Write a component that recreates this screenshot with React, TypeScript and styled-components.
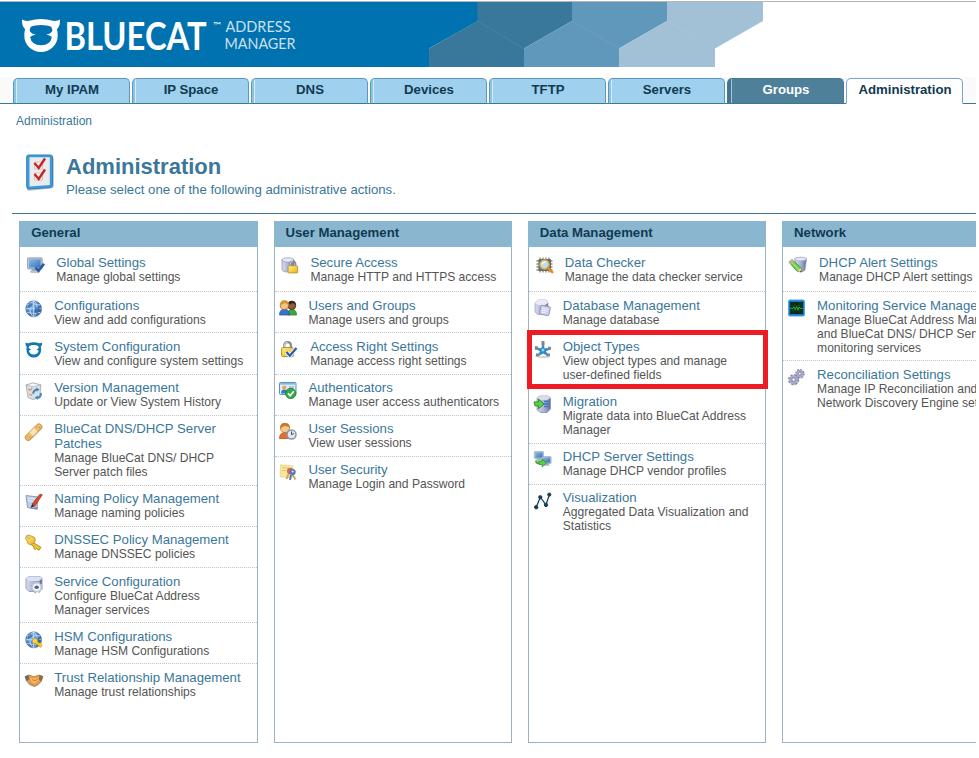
import React from "react";
import styled, { createGlobalStyle, css } from "styled-components";

const GlobalStyle = createGlobalStyle`
  *, *::before, *::after { box-sizing: border-box; }
  html, body { margin: 0; padding: 0; background: #fff; overflow: hidden; }
  body { font-family: "Liberation Sans", Arial, sans-serif; font-size: 12px; color: #555; }
`;

const Page = styled.div`
  width: 976px;
  height: 758px;
  overflow: hidden;
  padding-top: 1px;
`;

const Banner = styled.header`
  height: 66px;
  border-top: 1px solid #b3b6b6;
  svg { display: block; }
`;

const TabBar = styled.nav`
  display: flex;
  gap: 2px;
  height: 27px;
  margin-top: 10px;
  padding: 1px 0 0 13px;
  background: linear-gradient(#3a7898, #3a7898) bottom / 100% 1px no-repeat #fafafa;
`;

type TabKind = "normal" | "dark" | "active";

const tabLooks = {
  normal: css`
    color: #113a50;
    border-color: #5b98bd;
    border-bottom-color: #3a7898;
    background: linear-gradient(90deg, #8cc4e4 2px, #d5edfa 2px, #d5edfa 3px, #9fd0ee 3px);
  `,
  dark: css`
    color: #fff;
    border-color: #427a94;
    border-bottom-color: #3a7898;
    background: linear-gradient(90deg, #44748d 3px, #a5c8d6 3px, #a5c8d6 4px, #4f8099 4px);
  `,
  active: css`
    color: #113a50;
    border-color: #7ba5d8;
    border-bottom-color: #fff;
    background: #fff;
  `,
};

const Tab = styled.a<{ $kind: TabKind }>`
  width: 117px;
  height: 26px;
  flex: none;
  padding-left: 1px;
  border: 1px solid;
  border-radius: 5px 5px 0 0;
  text-align: center;
  font-size: 13.2px;
  line-height: 22px;
  font-weight: bold;
  ${(p) => tabLooks[p.$kind]}
`;

const Breadcrumb = styled.div`
  padding: 10px 16px 0;
  line-height: 14px;
  color: #3a7799;
`;

const Heading = styled.section`
  display: flex;
  gap: 11px;
  margin: 26px 0 0 12px;
  padding-left: 13px;
  height: 60px;
  border-bottom: 1px solid #3a7799;
  color: #3a7799;
`;

const Title = styled.h1`
  margin: 0;
  font-size: 22px;
  line-height: 25px;
`;

const Subtitle = styled.p`
  margin: 3px 0 0;
  font-size: 13.2px;
  line-height: 15px;
`;

const Columns = styled.main`
  display: flex;
  gap: 15.8px;
  padding: 7px 0 0 19.4px;
`;

const Panel = styled.section`
  flex: none;
  width: 238.5px;
  height: 522px;
  border: 1px solid #9bb3c5;
  border-top: 0;
`;

const PanelHeader = styled.h2`
  margin: 0 -1px;
  height: 26px;
  padding-left: 11.8px;
  background: #8bb6d0;
  color: #113a50;
  font-size: 13.2px;
  line-height: 24px;
`;

const Row = styled.div<{ $first: boolean; $shift: number }>`
  display: flex;
  gap: 11px;
  padding: ${(p) => (p.$first ? "8.4px 0 6.8px" : "5.5px 0 5.66px")} ${(p) => 4.8 + p.$shift}px;
  border-bottom: 1px dotted #c4c4c4;
  white-space: pre;
  &:last-child { border-bottom: 0; }
`;

const MarkedRow = styled(Row)`
  position: relative;
  &::after {
    content: "";
    position: absolute;
    inset: -3px -3px -1px -2px;
    border: 5px solid #ed1c24;
  }
`;

const IconSlot = styled.span`
  flex: none;
  width: 18px;
  height: 18px;
  margin-top: 2px;
  svg { display: block; overflow: visible; }
`;

const RowTitle = styled.a`
  display: block;
  color: #3a7799;
  font-size: 13.2px;
  line-height: 15px;
`;

const RowText = styled.div`
  color: #555;
  font-size: 12.08px;
  line-height: 14px;
`;

/* ---------- icon building blocks ---------- */

const Globe = () => (
  <g>
    <circle cx="9" cy="9.5" r="8" fill="#a8b2bc" opacity=".6" />
    <circle cx="8.6" cy="8.7" r="7.8" fill="url(#globe)" stroke="#486ba3" strokeWidth=".8" />
    <g fill="none" stroke="#bfdcf5" strokeWidth=".9">
      <ellipse cx="8.6" cy="8.7" rx="3.6" ry="7.6" />
      <path d="M8.6 1v15.4M1 8.7h15.2M2.2 5q6.4-2.2 12.8 0M2.2 12.4q6.4 2.2 12.8 0" />
    </g>
    <path d="M3 5l3-2 2 1-2 3-3 1zM10 8l4-1 1 3-3 4-2-2z" fill="#295b9c" opacity=".7" />
  </g>
);

const Cylinder = ({ x = 0, y = 0, w = 14, h = 15 }: { x?: number; y?: number; w?: number; h?: number }) => (
  <g transform={`translate(${x} ${y}) scale(${w / 14} ${h / 15})`}>
    <path d="M1 3v9.5q0 2.5 6 2.5t6-2.5V3z" fill="url(#drum)" stroke="#8a90ab" strokeWidth=".7" />
    <ellipse cx="7" cy="3" rx="6" ry="2.2" fill="#e6e9f7" stroke="#8990b2" strokeWidth=".7" />
  </g>
);

const Monitor = ({ x = 0, y = 0, s = 1 }: { x?: number; y?: number; s?: number }) => (
  <g transform={`translate(${x} ${y}) scale(${s})`}>
    <path d="M5 11h5l1.5 3h-8z" fill="#9ba6b4" />
    <rect x=".5" y=".8" width="14" height="10.6" rx="1" fill="#b7c6d6" stroke="#8b9cae" strokeWidth=".8" />
    <rect x="2" y="2.2" width="11" height="7.8" fill="url(#screen)" />
    <ellipse cx="7.5" cy="14" rx="5" ry="1.2" fill="#bbc2ca" />
  </g>
);

const Gear = ({ cx, cy, r }: { cx: number; cy: number; r: number }) => (
  <g>
    <circle cx={cx + 0.6} cy={cy + 0.8} r={r} fill="#999" opacity=".4" />
    <circle cx={cx} cy={cy} r={r * 0.92} fill="none" stroke="#7e82a4" strokeWidth={r * 0.34} strokeDasharray={`${r * 0.4} ${r * 0.323}`} />
    <circle cx={cx} cy={cy} r={r * 0.62} fill="#f4f4fc" stroke="#a5a8cc" strokeWidth={r * 0.5} />
    <circle cx={cx} cy={cy} r={r * 0.33} fill="#fff" stroke="#686c90" strokeWidth=".8" />
  </g>
);

const Padlock = ({ x, y, s = 1 }: { x: number; y: number; s?: number }) => (
  <g transform={`translate(${x} ${y}) scale(${s})`}>
    <path d="M2.7 6V4.2Q2.7 1 5.5 1t2.8 3.2V6" fill="none" stroke="#858b94" strokeWidth="1.9" />
    <path d="M2.7 6V4.2Q2.7 1 5.5 1" fill="none" stroke="#d6dade" strokeWidth=".8" />
    <rect x=".5" y="5.5" width="10" height="7.5" rx="1" fill="url(#gold)" stroke="#b58a25" strokeWidth=".8" />
  </g>
);

const GreenArrow = ({ x, y, s = 1 }: { x: number; y: number; s?: number }) => (
  <path
    transform={`translate(${x} ${y}) scale(${s})`}
    d="M0 3.5h4.5V.6L10 5.5l-5.5 5V7.5H1z"
    fill="#5bd246"
    stroke="#24842c"
    strokeWidth=".9"
  />
);

const catPath =
  "M.5 2.2Q4 4.4 9 3.2Q13 1.6 19.5 1.6T30 3.2Q35 4.4 38.5 2.2Q39 8.5 35.4 12Q36.4 15 36.2 18.5A16.7 16.2 0 0 1 2.8 18.5Q2.6 15 3.6 12Q0 8.5 .5 2.2Z" +
  "M9.4 9.4Q13 7.6 19.5 7.6T29.6 9.4Q31.6 12.5 30.2 14.6Q28.4 16.6 24.8 17.2Q28.2 17.9 30.4 19.8Q29 28 19.5 28T8.6 19.8Q10.8 17.9 14.2 17.2Q10.6 16.6 8.8 14.6Q7.4 12.5 9.4 9.4Z";

const icons: Record<string, React.ReactNode> = {
  global: (
    <g>
      <Monitor x={0} y={0} s={1.05} />
      <path d="M8.5 10.5l3 3.3 5.5-7" fill="none" stroke="#2459a8" strokeWidth="2.6" />
    </g>
  ),
  globe: <Globe />,
  cat: <path d={catPath} fill="#1377b0" fillRule="evenodd" transform="translate(.2 .6) scale(.44 .46)" />,
  version: (
    <g>
      <path d="M1 3l7-2 8 2-1.5 13-7 1.5L3 15.5z" fill="#dcdfe1" stroke="#9fa6ad" strokeWidth=".8" />
      <path d="M1 3l7 1.7L16 3 8 1z" fill="#f6f7f8" stroke="#9fa6ad" strokeWidth=".6" />
      <path d="M3.5 7q2 2.5 3.5-1M4.5 12l2.5 1.5" fill="none" stroke="#de8a6b" strokeWidth="1.3" />
      <path d="M8.2 11.8q.3-4 4-4.2M15.8 10.8q.6 4.6-3.6 5" fill="none" stroke="#4385bd" strokeWidth="2" />
      <path d="M11.2 5.5l3.5 2-3.2 2.2zM13 13.5l-3.3 2.2 3.3 2z" fill="#4385bd" />
    </g>
  ),
  patch: (
    <g transform="rotate(-45 9 9)">
      <rect x="-1.8" y="6.8" width="21" height="5.6" rx="2.8" fill="#8c745a" opacity=".5" />
      <rect x="-2" y="5.8" width="21" height="5.6" rx="2.8" fill="#efbd67" stroke="#c08a3f" strokeWidth=".8" />
      <rect x="5.5" y="6.2" width="6.4" height="4.9" fill="#f9e6b8" />
      <path d="M.8 7.5h.1m1.5 2.3h.1M14.5 7.5h.1m1.4 2.2h.1" stroke="#b87c35" strokeWidth="1" strokeLinecap="round" />
    </g>
  ),
  naming: (
    <g>
      <path d="M1 2.5l12 1.5-1 12-9.5-1.5z" fill="#b9cfea" stroke="#8496ac" strokeWidth=".9" />
      <path d="M3 5l7 1M3 7.5l6 1" stroke="#e9f1fb" strokeWidth="1.2" />
      <path d="M4.5 15.5l8 1.2.5-3z" fill="#777" opacity=".6" />
      <path d="M7.2 10.8L15 1.2l2.3.6-7.6 11.5z" fill="#e0442f" stroke="#a43728" strokeWidth=".8" />
      <path d="M7.2 10.8l2.5 2.5-4.2 1.7z" fill="#373737" />
    </g>
  ),
  key: (
    <g transform="translate(-.5 -.6)">
      <path d="M8.5 9l8 5-2 2.8-2.6-1.6-1.1 1-1.8-1.5.7-1.2L6.5 11z" fill="#eec32c" stroke="#a88420" strokeWidth=".9" />
      <path d="M2 2.5Q5 .5 7.6 3.2q2.5-.1 3.1 2.4.5 3.3-2.3 4.4-1.8 2.2-4 .7Q2 9.6 2.8 7.7-.4 5 2 2.5z" fill="url(#gold)" stroke="#b8922b" strokeWidth=".9" />
      <ellipse cx="4" cy="4.3" rx="1.2" ry=".8" fill="#fff" stroke="#ac8214" strokeWidth=".6" transform="rotate(40 4 4.3)" />
    </g>
  ),
  service: (
    <g>
      <path d="M1 2.5L4 .5h11l2 2v10l-3 3H4l-3-3z" fill="url(#drum)" stroke="#8b92ae" strokeWidth=".8" />
      <path d="M1 2.5L4 .5h11l2 2L14 5H4z" fill="#dce1f1" />
      <circle cx="11.7" cy="11.3" r="5.2" fill="none" stroke="#b3b9c4" strokeWidth="1.8" strokeDasharray="2.3 1.8" />
      <circle cx="11.7" cy="11.3" r="4.4" fill="#f3f4f8" stroke="#c3c9d3" strokeWidth="1.2" />
      <ellipse cx="11.7" cy="11.3" rx="2.2" ry="1.7" fill="#43659b" />
    </g>
  ),
  hsm: (
    <g>
      <Globe />
      <path d="M11 11l5.5 4.5" stroke="#b68a18" strokeWidth="3.2" />
      <circle cx="9.9" cy="10" r="2.6" fill="#ffd848" stroke="#c09a2c" strokeWidth=".8" />
      <path d="M11 11l5.5 4.5M14.5 13.5l2.5-1" stroke="#f8cb28" strokeWidth="2" />
    </g>
  ),
  hands: (
    <g>
      <path d="M1 8q7 9 16 1l-4 4.7-4 1.3-5-2z" fill="#888" opacity=".5" />
      <path d="M0 4.5L4 3l5 1.8L14 3l4 1.5-1.8 5-3.7 3-3.2 1.8L5 12.2 1.5 9z" fill="#e79a48" stroke="#a56a35" strokeWidth=".7" />
      <path d="M0 4.5L3.4 3 4.4 7 1.8 9.2z" fill="#5d7079" />
      <path d="M18 4.5L14.6 3l-1 4 2.6 2.5z" fill="#8c6a58" />
      <path d="M5 5.6l4 1L13 5l.8 3L9.6 12 6 9.8z" fill="#fbb65d" />
      <path d="M7 7.5l3 1.3 3-2" fill="none" stroke="#b3682b" strokeWidth=".7" />
    </g>
  ),
  secure: (
    <g>
      <Cylinder x={0} y={0} w={14} h={15} />
      <Padlock x={6.6} y={3.5} s={0.96} />
    </g>
  ),
  users: (
    <g>
      <path d="M8.5 15q0-5.5 4.5-5.5t4.5 5.5z" fill="#3eaa3a" stroke="#286e2a" strokeWidth=".7" />
      <circle cx="12.8" cy="5.5" r="4" fill="#8d5d36" stroke="#38271c" strokeWidth=".8" />
      <path d="M8.8 5.2q0-4.4 4-4.4t4 4.4l-3-2.3z" fill="#302620" />
      <path d="M.5 15q0-5.8 5-5.8t5 5.8z" fill="#3675ca" stroke="#234a8c" strokeWidth=".7" />
      <circle cx="5.4" cy="5.4" r="4.2" fill="#f6c582" stroke="#96642a" strokeWidth=".8" />
      <path d="M1 5.4Q1 .2 5.4.2t4.6 5L6 2.9z" fill="#d39335" />
    </g>
  ),
  access: (
    <g transform="translate(-1 0)">
      <Padlock x={1} y={0} s={1.2} />
      <path d="M6.5 11l3.3 3.7L16.5 7" fill="none" stroke="#fff" strokeWidth="4" />
      <path d="M6.5 11l3.3 3.7L16.5 7" fill="none" stroke="#2a5eb1" strokeWidth="2.3" />
    </g>
  ),
  auth: (
    <g>
      <rect x=".5" y=".5" width="16.5" height="12" rx="1" fill="#dcecfb" stroke="#6090be" />
      <path d="M1 1h15.5v1.6H1z" fill="#88b6df" />
      <path d="M2 11.5q0-4 3.2-4t3.2 4z" fill="#3876bc" />
      <circle cx="5.2" cy="5.6" r="2.2" fill="#ddaa69" />
      <path d="M10 5h5M10 7h5" stroke="#8ba7c2" />
      <circle cx="11.7" cy="11.4" r="5.2" fill="#31ab49" stroke="#1c7533" strokeWidth=".8" />
      <path d="M9 11.4l2.1 2.3 3.7-4.5" fill="none" stroke="#fff" strokeWidth="1.8" />
    </g>
  ),
  sessions: (
    <g>
      <path d="M.5 15.5q0-6.2 6.5-6.2t6.5 6.2z" fill="#e96d28" stroke="#b35727" strokeWidth=".8" />
      <circle cx="6" cy="5" r="4.6" fill="#f7c78c" stroke="#b47a40" strokeWidth=".8" />
      <path d="M1.3 5.3Q.8.1 5.7.1T10.7 4.5L6 2.7z" fill="#c57a31" />
      <circle cx="12.5" cy="11.5" r="4.5" fill="#dfe8f1" stroke="#8b96a3" strokeWidth="1.5" />
      <path d="M12.5 8.5v3.2l2.5-1.2" fill="none" stroke="#45576b" />
    </g>
  ),
  security: (
    <g>
      <path d="M1.5.8l12.5 1-1 12-12-1z" fill="#f9e69d" stroke="#ead591" strokeWidth=".8" />
      <path d="M3 3.6l8 .6M3 6.5l4 .3" stroke="#e0c67f" />
      <path d="M10 9L7.5 15M12.5 9l4 6.5" stroke="#c9a45a" strokeWidth="1.8" />
      <circle cx="11.3" cy="7" r="3.3" fill="#d9694b" />
      <circle cx="13.6" cy="8" r="3.1" fill="#5177be" />
      <circle cx="13.6" cy="7.6" r="1" fill="#e7ecf7" />
      <path d="M12 11l-1 5" stroke="#4973b5" strokeWidth="1.8" />
    </g>
  ),
  checker: (
    <g>
      <path d="M4 .5v15M7 .5v15M10 .5v15M13 .5v15M.5 4h16M.5 7h16M.5 10h16M.5 13h16" stroke="#8a8a8a" strokeWidth="1.3" />
      <rect x="2.5" y="2" width="12.5" height="12" rx="1" fill="#686b6e" />
      <circle cx="8.5" cy="7.6" r="4.5" fill="#b9dff5" stroke="#e2ad3b" strokeWidth="1.5" />
      <path d="M6 7.2Q7 4.8 9.7 5.2" fill="none" stroke="#fff" strokeWidth="1.2" />
      <path d="M12 11l4.2 4.2" stroke="#e38a29" strokeWidth="2.6" strokeLinecap="round" />
    </g>
  ),
  database: (
    <g>
      <path d="M1 3l3-3h8l2 3v9l-3 2.5H4L1 12z" fill="url(#drum)" stroke="#a0a4c4" strokeWidth=".8" />
      <path d="M1 3l3-3h8l2 3-3 2H4z" fill="#eaebf7" />
      <rect x="6" y="6" width="9.6" height="9" rx="1" fill="#cdd0ea" stroke="#9296bd" strokeWidth=".9" transform="rotate(12 11 11)" />
      <path d="M8 8l6 1.3M8 10l5.5 1.2M7.5 12l4 .8" stroke="#f1f2fb" />
    </g>
  ),
  object: (
    <g>
      <ellipse cx="9.5" cy="16" rx="6" ry="1.2" fill="#aaa" opacity=".5" />
      <path d="M9 9V1.8M9 9L2.5 7.4M9 9.4l7.5-2M9 9.4l-5 5M9 9.4l5 5" stroke="#8c959e" strokeWidth="2.6" />
      <path d="M7.6 0h2.8v4H7.6zM.6 5.6l2.8-.5.8 3.2-3 .6zM14.4 5.4l2.8.7-.6 3-2.8-.6zM2.2 12.3l3 .8-.7 2.8-2.9-.7zM12.6 12.4h3.4v3h-3.4z" fill="#7d868f" />
      <path d="M9 3.8l1.7 3.6 4.5.3-3.4 2.7.9 3.8L9 12.6l-3.5 2 .8-3.9L2.9 8l4.3-.6z" fill="#258ad1" />
      <circle cx="8.9" cy="9" r="1.5" fill="#8fd7f6" />
    </g>
  ),
  migration: (
    <g>
      <path d="M3 2l3-2h8l2.5 2v11L13 16.5H7L3 14z" fill="url(#drum)" stroke="#8890ab" strokeWidth=".8" />
      <path d="M3 2l3-2h8l2.5 2L13 4H6z" fill="#d9ddeb" />
      <path d="M10 5.5h5.5M10 8h5.5M10 10.5h5.5" stroke="#3f76cb" strokeWidth="1.4" />
      <GreenArrow x={0} y={2.4} s={1} />
    </g>
  ),
  dhcp: (
    <g>
      <Monitor x={0} y={0} s={0.66} />
      <Monitor x={7.6} y={5} s={0.66} />
      <path d="M2 9.5q0 3 3.5 3" fill="none" stroke="#46ad3c" strokeWidth="2" />
      <GreenArrow x={4.5} y={7.5} s={0.8} />
    </g>
  ),
  visual: (
    <g fill="#173f54" stroke="#173f54">
      <path d="M2.2 15.2L6.3 5.2 12 12.9 15.3 2.6" fill="none" strokeWidth="1.3" />
      <circle cx="2.2" cy="15.2" r="1.7" />
      <circle cx="6.3" cy="5.2" r="1.6" />
      <circle cx="12" cy="12.9" r="1.7" />
      <circle cx="15.3" cy="2.6" r="1.6" />
    </g>
  ),
  alert: (
    <g transform="translate(-1 0)">
      <path d="M5.5 1.5q6-2.4 12 0L16 13q-3.5 3.4-7 .5z" fill="url(#drum)" stroke="#8a90ab" strokeWidth=".7" />
      <ellipse cx="11.5" cy="2" rx="6" ry="1.7" fill="#e6e9f7" stroke="#a5aac6" strokeWidth=".6" />
      <path d="M0 5.2l3-2.7 9 8.2.3 4.3-4.3-.7z" fill="#6fce4d" stroke="#4a9038" strokeWidth=".8" />
      <path d="M2 4.6l8.2 8.4" stroke="#b9eea3" />
      <path d="M0 5.2l3-2.7 2 1.9L2.1 7z" fill="#dca5a0" />
      <path d="M8.3 14.3l4 .7-.3-4z" fill="#efd397" />
      <path d="M10.8 14.7l1.6.3-.1-1.7z" fill="#333" />
    </g>
  ),
  monitoring: (
    <g>
      <rect x=".5" y="0" width="16" height="16" rx="1.5" fill="#1677cf" stroke="#47a7eb" />
      <rect x="2.2" y="2" width="12.8" height="12" fill="#092817" />
      <path d="M2.5 5.5h12.5M2.5 10.5h12.5M6 2.5v11M11 2.5v11" stroke="#155329" strokeWidth=".6" />
      <path d="M2.2 8.3H5l1-1.4 1.3 2.6 1.3-3 1.2 3.6L11 7l1 1.3h3" fill="none" stroke="#2fb238" />
    </g>
  ),
  gears: (
    <g>
      <Gear cx={11.8} cy={4.6} r={4.3} />
      <Gear cx={5.6} cy={10.6} r={5.1} />
    </g>
  ),
};

type Item = { icon: string; title: string; text: string; shift?: number; marked?: boolean };

const panels: { name: string; items: Item[] }[] = [
  {
    name: "General",
    items: [
      { icon: "global", title: "Global Settings", text: "Manage global settings", shift: 2 },
      { icon: "globe", title: "Configurations", text: "View and add configurations" },
      { icon: "cat", title: "System Configuration", text: "View and configure system settings" },
      { icon: "version", title: "Version Management", text: "Update or View System History" },
      { icon: "patch", title: "BlueCat DNS/DHCP Server\nPatches", text: "Manage BlueCat DNS/ DHCP\nServer patch files" },
      { icon: "naming", title: "Naming Policy Management", text: "Manage naming policies" },
      { icon: "key", title: "DNSSEC Policy Management", text: "Manage DNSSEC policies" },
      { icon: "service", title: "Service Configuration", text: "Configure BlueCat Address\nManager services" },
      { icon: "hsm", title: "HSM Configurations", text: "Manage HSM Configurations" },
      { icon: "hands", title: "Trust Relationship Management", text: "Manage trust relationships" },
    ],
  },
  {
    name: "User Management",
    items: [
      { icon: "secure", title: "Secure Access", text: "Manage HTTP and HTTPS access", shift: 2 },
      { icon: "users", title: "Users and Groups", text: "Manage users and groups" },
      { icon: "access", title: "Access Right Settings", text: "Manage access right settings", shift: 1.7 },
      { icon: "auth", title: "Authenticators", text: "Manage user access authenticators" },
      { icon: "sessions", title: "User Sessions", text: "View user sessions" },
      { icon: "security", title: "User Security", text: "Manage Login and Password" },
    ],
  },
  {
    name: "Data Management",
    items: [
      { icon: "checker", title: "Data Checker", text: "Manage the data checker service", shift: 2 },
      { icon: "database", title: "Database Management", text: "Manage database" },
      { icon: "object", title: "Object Types", text: "View object types and manage\nuser-defined fields", marked: true },
      { icon: "migration", title: "Migration", text: "Migrate data into BlueCat Address\nManager" },
      { icon: "dhcp", title: "DHCP Server Settings", text: "Manage DHCP vendor profiles" },
      { icon: "visual", title: "Visualization", text: "Aggregated Data Visualization and\nStatistics" },
    ],
  },
  {
    name: "Network",
    items: [
      { icon: "alert", title: "DHCP Alert Settings", text: "Manage DHCP Alert settings", shift: 2 },
      {
        icon: "monitoring",
        title: "Monitoring Service Management",
        text: "Manage BlueCat Address Manager\nand BlueCat DNS/ DHCP Server\nmonitoring services",
      },
      { icon: "gears", title: "Reconciliation Settings", text: "Manage IP Reconciliation and\nNetwork Discovery Engine settings" },
    ],
  },
];

const tabs: { label: string; kind: TabKind }[] = [
  { label: "My IPAM", kind: "normal" },
  { label: "IP Space", kind: "normal" },
  { label: "DNS", kind: "normal" },
  { label: "Devices", kind: "normal" },
  { label: "TFTP", kind: "normal" },
  { label: "Servers", kind: "normal" },
  { label: "Groups", kind: "dark" },
  { label: "Administration", kind: "active" },
];

const BannerArt = () => (
  <svg width="976" height="65" viewBox="0 2 976 65">
    <path d="M0 2H478V21L429 48.5V67H0z" fill="#0072b0" />
    <path d="M477.5 2H572V21L524 48.5V67H429V48.5L477.5 21z" fill="#3a789b" />
    <path d="M572 2H667V21L619 48.5V67H524V48.5L572 21z" fill="#5f98bb" />
    <path d="M667 2H763V21L715 48.5V67H619V48.5L667 21z" fill="#a2c0d6" />
    <g stroke="#fff" strokeOpacity=".1" strokeWidth=".7">
      <path d="M477.5 21L524 48.5M572 21L619 48.5M667 21L715 48.5" />
    </g>
    <path d={catPath} fill="#fff" fillRule="evenodd" transform="translate(21.5 17.3)" />
    <g fill="#fff" fontFamily="Lato, sans-serif">
      <text x="64.5" y="49.5" fontSize="37.5" fontWeight="700" textLength="142" lengthAdjust="spacingAndGlyphs">BLUECAT</text>
      <text x="213" y="28" fontSize="8" textLength="8" lengthAdjust="spacingAndGlyphs">™</text>
      <g fillOpacity=".8" fontSize="15.2">
        <text x="225.5" y="32.3" textLength="65" lengthAdjust="spacingAndGlyphs">ADDRESS</text>
        <text x="224.5" y="49.3" textLength="71" lengthAdjust="spacingAndGlyphs">MANAGER</text>
      </g>
    </g>
  </svg>
);

const ChecklistIcon = () => (
  <svg width="30" height="38" viewBox="0 0 30 38">
    <path d="M3 2.5h23.5q2.3 0 2.3 2.5v26.5q0 2.5-2.8 3L4 36.8q-2 0-2-3V5z" fill="#999" opacity=".65" />
    <path d="M3.5 1h21.8q2.2 0 2.2 2v28q0 2.3-2.6 2.5L3.7 35q-2 0-2-2.5V3q0-2 1.8-2z" fill="#3d9bd9" stroke="#2b82c4" />
    <path d="M4.5 3.2h20.3V31L4.5 32.6z" fill="#e9ebed" />
    <path d="M9.5 8h8v7h-8zM9.5 19h8v7h-8z" fill="#f9f9f9" stroke="#bbb" strokeWidth=".8" />
    <path d="M9.5 9l4.2 5L20 4.5M9.5 20l4.2 5L20 15.5" fill="none" stroke="#cd2222" strokeWidth="2.4" />
  </svg>
);

const Gradients = () => (
  <defs>
    <radialGradient id="globe" cx=".35" cy=".3" r=".8">
      <stop offset="0" stopColor="#99c7ef" />
      <stop offset=".55" stopColor="#4b82c6" />
      <stop offset="1" stopColor="#294f91" />
    </radialGradient>
    <linearGradient id="drum">
      <stop offset="0" stopColor="#d8dcef" />
      <stop offset=".5" stopColor="#adb4d4" />
      <stop offset="1" stopColor="#676f99" />
    </linearGradient>
    <linearGradient id="screen" x2="1" y2="1">
      <stop offset="0" stopColor="#87bbea" />
      <stop offset="1" stopColor="#3d70b5" />
    </linearGradient>
    <linearGradient id="gold" x2="1" y2="1">
      <stop offset="0" stopColor="#fff18a" />
      <stop offset="1" stopColor="#ecae1b" />
    </linearGradient>
  </defs>
);

const PanelRow = ({ item, first }: { item: Item; first: boolean }) => {
  const Shell = item.marked ? MarkedRow : Row;
  return (
    <Shell $first={first} $shift={item.shift ?? 0}>
      <IconSlot>
        <svg width="18" height="18" viewBox="0 0 18 18">
          <Gradients />
          {icons[item.icon]}
        </svg>
      </IconSlot>
      <div>
        <RowTitle>{item.title}</RowTitle>
        <RowText>{item.text}</RowText>
      </div>
    </Shell>
  );
};

export default function App() {
  return (
    <Page>
      <GlobalStyle />
      <Banner>
        <BannerArt />
      </Banner>
      <TabBar>
        {tabs.map((t) => (
          <Tab key={t.label} $kind={t.kind}>{t.label}</Tab>
        ))}
      </TabBar>
      <Breadcrumb>Administration</Breadcrumb>
      <Heading>
        <ChecklistIcon />
        <div>
          <Title>Administration</Title>
          <Subtitle>Please select one of the following administrative actions.</Subtitle>
        </div>
      </Heading>
      <Columns>
        {panels.map((p) => (
          <Panel key={p.name}>
            <PanelHeader>{p.name}</PanelHeader>
            {p.items.map((item, i) => (
              <PanelRow key={item.title} item={item} first={i === 0} />
            ))}
          </Panel>
        ))}
      </Columns>
    </Page>
  );
}
